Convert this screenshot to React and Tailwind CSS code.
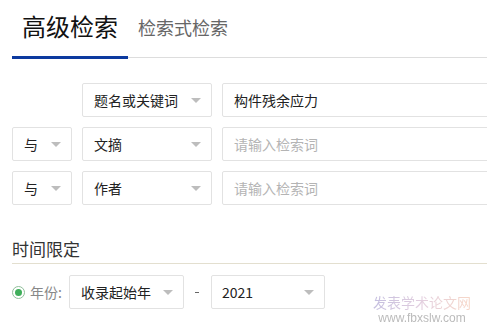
import React from "react";

const Caret = ({ className = "" }) => (
  <span className={"block w-0 h-0 border-l-[5px] border-r-[5px] border-t-[5px] border-l-transparent border-r-transparent border-t-[#bdbdbd] " + className} />
);

const Select = ({ w, label }) => (
  <div className={`${w} h-[34px] shrink-0 flex items-center justify-between pl-[11px] pr-[10px] border border-[#e2e2e2] rounded-[2px] bg-white`}>
    <span className="text-[14px] leading-[14px] text-[#222]">{label}</span>
    <Caret />
  </div>
);

const Input = ({ value, placeholder }) => (
  <div className="w-[320px] h-[34px] shrink-0 flex items-center pl-[11px] border border-[#e2e2e2] rounded-[2px] bg-white">
    {value ? (
      <span className="text-[14px] leading-[14px] text-[#222]">{value}</span>
    ) : (
      <span className="text-[14px] leading-[14px] text-[#b4b4b4]">{placeholder}</span>
    )}
  </div>
);

export default function App() {
  return (
    <div
      className="relative w-[487px] h-[331px] overflow-hidden bg-white"
      style={{ fontFamily: '"Microsoft YaHei", "Noto Sans CJK SC", "Noto Sans", sans-serif' }}
    >
      <div className="flex h-[59px] pl-[12px]">
        <div className="w-[116px] shrink-0 flex items-center justify-center border-b-[3px] border-[#0c3a9f] pb-[4px]">
          <span className="text-[24px] leading-[24px] text-[#111]">高级检索</span>
        </div>
        <div className="flex-1 mb-[1px] border-b border-[#dddddd] flex items-center pl-[10px] pb-[3px]">
          <span className="text-[18px] leading-[18px] text-[#666]">检索式检索</span>
        </div>
      </div>

      <div className="flex flex-col gap-[10px] pl-[12px] mt-[24px]">
        <div className="flex gap-[10px]">
          <div className="w-[60px] shrink-0" />
          <Select w="w-[130px]" label="题名或关键词" />
          <Input value="构件残余应力" />
        </div>
        <div className="flex gap-[10px]">
          <Select w="w-[60px]" label="与" />
          <Select w="w-[130px]" label="文摘" />
          <Input placeholder="请输入检索词" />
        </div>
        <div className="flex gap-[10px]">
          <Select w="w-[60px]" label="与" />
          <Select w="w-[130px]" label="作者" />
          <Input placeholder="请输入检索词" />
        </div>
      </div>

      <div className="ml-[12px] mt-[35px] pb-[6px] border-b border-[#e3dfcf] text-[17px] leading-[17px] text-[#333]">
        时间限定
      </div>

      <div className="flex items-center pl-[12px] mt-[11px]">
        <span className="w-[13px] h-[13px] rounded-full border border-[#8fbf9a] flex items-center justify-center shrink-0">
          <span className="w-[7px] h-[7px] rounded-full bg-[#3fae5a]" />
        </span>
        <span className="ml-[5px] text-[14px] leading-[14px] text-[#888]">年份:</span>
        <div className="ml-[7px]">
          <div className="w-[115px] h-[34px] flex items-center justify-between pl-[11px] pr-[10px] border border-[#e2e2e2] rounded-[2px]">
            <span className="text-[14px] leading-[14px] text-[#222]">收录起始年</span>
            <Caret />
          </div>
        </div>
        <span className="ml-[11px] w-[4px] h-px bg-[#666]" />
        <div className="ml-[12px] w-[114px] h-[34px] flex items-center justify-between pl-[10px] pr-[10px] border border-[#e2e2e2] rounded-[2px]">
          <span className="text-[14px] leading-[14px] text-[#222]">2021</span>
          <Caret />
        </div>
      </div>

      <div className="absolute left-[373px] top-[294px] flex flex-col items-center opacity-50">
        <span
          className="text-[14px] leading-[16px]"
          style={{ background: "linear-gradient(90deg,#8a7fc0,#c8a0c0,#f0b090)", WebkitBackgroundClip: "text", color: "transparent" }}
        >
          发表学术论文网
        </span>
        <span className="text-[12px] leading-[13px] text-[#777] mt-[2px]" style={{ fontFamily: '"Liberation Sans", sans-serif' }}>
          www.fbxslw.com
        </span>
      </div>
    </div>
  );
}
